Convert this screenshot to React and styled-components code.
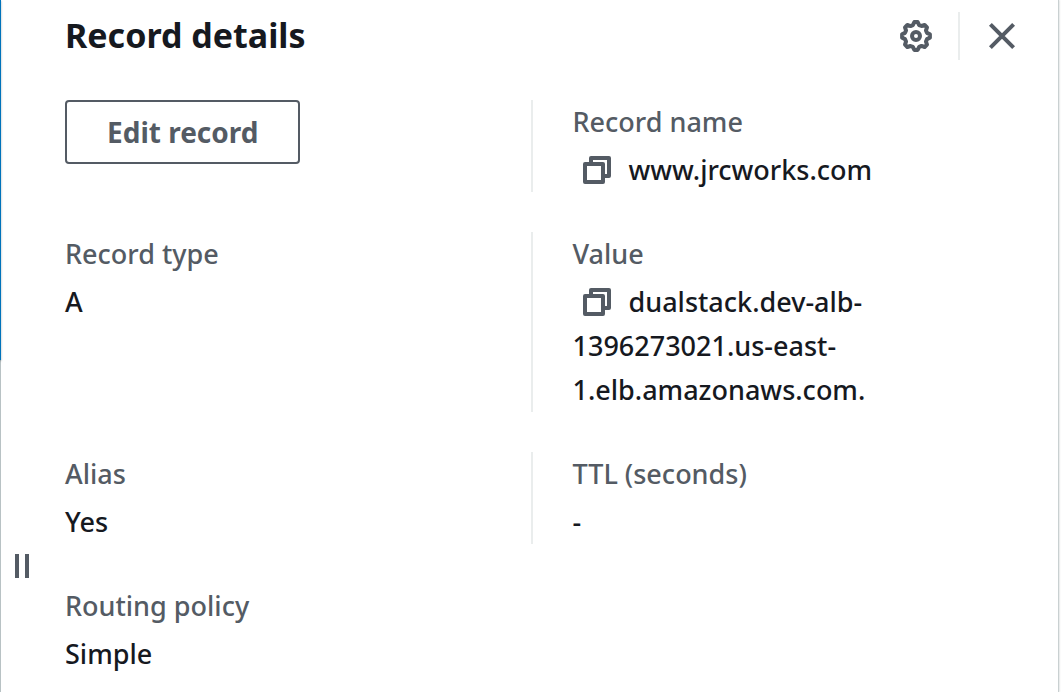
import React from "react";
import styled, { createGlobalStyle } from "styled-components";

const GlobalStyle = createGlobalStyle`
  *, *::before, *::after { box-sizing: border-box; }
  body {
    margin: 0;
    background: #ffffff;
    color: #16191f;
    font-family: "Noto Sans", "Open Sans", sans-serif;
    font-size: 27px;
    font-weight: 500;
    line-height: 44px;
  }
`;

const Panel = styled.section`
  display: flex;
  min-height: 100vh;
  margin-right: 3px;
  border-right: 1px solid #c9d0d1;
  box-shadow: 0 0 2px rgba(0, 28, 36, 0.25);
  background: #ffffff;
`;

const Rail = styled.div`
  display: flex;
  flex: 0 0 65px;
`;

const Edge = styled.div`
  width: 1px;
  background: #b8c2c4;
`;

const ActiveEdge = styled.div`
  height: 360px;
  background: #0073bb;
  box-shadow: 0 1px 2px rgba(0, 28, 36, 0.5);
`;

const ResizeHandle = styled.button`
  display: flex;
  gap: 6px;
  align-self: flex-start;
  margin: 554px 0 0 14px;
  padding: 0;
  border: 0;
  background: none;
  cursor: col-resize;
`;

const Grip = styled.span`
  width: 4px;
  height: 24px;
  background: #545b64;
`;

const Content = styled.div`
  flex: 1;
  min-width: 0;
`;

const Header = styled.header`
  display: flex;
  align-items: flex-start;
  justify-content: space-between;
  padding: 12px 40px 0 0;
`;

const Title = styled.h2`
  margin: 0;
  font-size: 34px;
  font-weight: 700;
  line-height: 46px;
`;

const Actions = styled.div`
  display: flex;
  align-items: center;
  gap: 26px;
`;

const ActionsDivider = styled.span`
  width: 2px;
  height: 48px;
  background: #eaeded;
`;

const IconButton = styled.button`
  display: inline-flex;
  padding: 0;
  border: 0;
  background: none;
  color: #545b64;
  cursor: pointer;
`;

const CopyButton = styled(IconButton)`
  margin: 0 16px 0 8px;
  vertical-align: -6px;
`;

const Details = styled.div`
  display: grid;
  grid-template-columns: repeat(2, minmax(0, 1fr));
  row-gap: 40px;
  padding: 40px 62px 16px 0;
`;

const Cell = styled.div`
  padding-left: ${(p) => (p.$divided ? "40px" : "0")};
  border-left: ${(p) => (p.$divided ? "2px solid #eaeded" : "0")};
`;

const Field = styled.dl`
  margin: 0;
`;

const Label = styled.dt`
  margin-bottom: 4px;
  color: #545b64;
`;

const Value = styled.dd`
  margin: 0;
`;

const EditButton = styled.button`
  height: 64px;
  padding: 0 40px;
  border: 2px solid #545b64;
  border-radius: 4px;
  background: #ffffff;
  color: #545b64;
  font: inherit;
  font-size: 28px;
  font-weight: 700;
  cursor: pointer;
`;

const gearPath = (() => {
  const points = [];
  for (let i = 0; i < 8; i += 1) {
    const mid = (i * Math.PI) / 4;
    [[-0.12, 14], [0.12, 14], [0.28, 11.4], [0.505, 11.4]].forEach(([offset, r]) => {
      const a = mid + offset;
      points.push(`${(16 + r * Math.sin(a)).toFixed(2)} ${(16 - r * Math.cos(a)).toFixed(2)}`);
    });
  }
  return `M${points.join("L")}Z`;
})();

const GearIcon = () => (
  <svg width="32" height="32" viewBox="0 0 32 32" fill="none" stroke="currentColor" strokeWidth="4" strokeLinejoin="round" aria-hidden="true">
    <path d={gearPath} />
    <circle cx="16" cy="16" r="4" />
  </svg>
);

const CloseIcon = () => (
  <svg width="32" height="32" viewBox="0 0 32 32" fill="none" stroke="currentColor" strokeWidth="4" aria-hidden="true">
    <path d="M4.4 4.4 27.6 27.6M27.6 4.4 4.4 27.6" />
  </svg>
);

const CopyIcon = () => (
  <svg width="32" height="32" viewBox="0 0 32 32" fill="none" stroke="currentColor" strokeWidth="4" strokeLinejoin="round" aria-hidden="true">
    <path d="M4 10h18v18H4z" />
    <path d="M10 10V4h18v18h-6" />
  </svg>
);

function RecordField({ label, value, copyable, divided }) {
  return (
    <Cell $divided={divided}>
      <Field>
        <Label>{label}</Label>
        <Value>
          {copyable && (
            <CopyButton type="button" aria-label={`Copy ${label}`}>
              <CopyIcon />
            </CopyButton>
          )}
          {value}
        </Value>
      </Field>
    </Cell>
  );
}

export default function App() {
  return (
    <>
      <GlobalStyle />
      <Panel>
        <Rail>
          <Edge>
            <ActiveEdge />
          </Edge>
          <ResizeHandle type="button" aria-label="Resize panel">
            <Grip />
            <Grip />
          </ResizeHandle>
        </Rail>
        <Content>
          <Header>
            <Title>Record details</Title>
            <Actions>
              <IconButton type="button" aria-label="Preferences">
                <GearIcon />
              </IconButton>
              <ActionsDivider />
              <IconButton type="button" aria-label="Close panel">
                <CloseIcon />
              </IconButton>
            </Actions>
          </Header>
          <Details>
            <Cell>
              <EditButton type="button">Edit record</EditButton>
            </Cell>
            <RecordField divided copyable label="Record name" value="www.jrcworks.com" />
            <RecordField label="Record type" value="A" />
            <RecordField divided copyable label="Value" value="dualstack.dev-alb-1396273021.us-east-1.elb.amazonaws.com." />
            <RecordField label="Alias" value="Yes" />
            <RecordField divided label="TTL (seconds)" value="-" />
            <RecordField label="Routing policy" value="Simple" />
          </Details>
        </Content>
      </Panel>
    </>
  );
}
